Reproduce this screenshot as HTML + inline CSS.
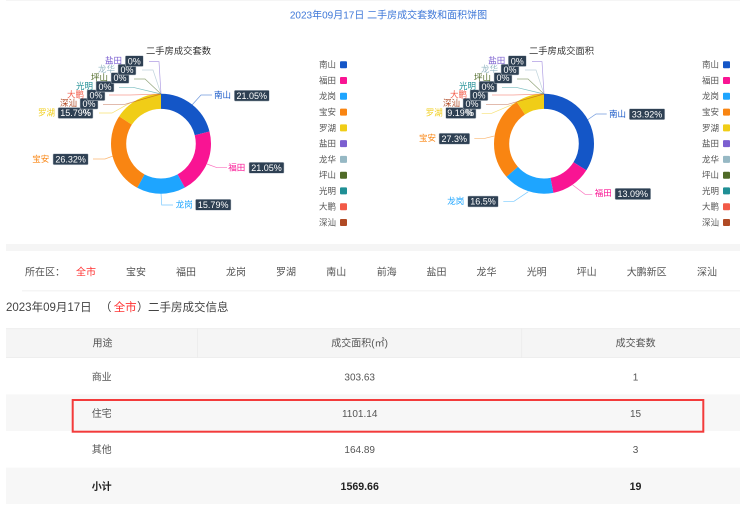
<!DOCTYPE html>
<html lang="zh">
<head>
<meta charset="utf-8">
<title>二手房成交信息</title>
<style>
html,body{margin:0;padding:0;background:#fff;width:740px;height:514px;overflow:hidden}
svg{display:block;font-family:"Liberation Sans","Noto Sans CJK SC",sans-serif;filter:blur(.3px)}
.l{font-size:8.5px}
.v{font-size:9px;fill:#fff;text-anchor:middle}
.b{fill:#2e4053;stroke:#c5ccd3;stroke-width:.5}
.g{font-size:8.5px;fill:#555}
.n{font-size:10px;fill:#555;text-anchor:middle}
.t{font-size:10px;fill:#555;text-anchor:middle}
.tb{font-size:10.6px;fill:#222;text-anchor:middle;font-weight:bold}
polyline{fill:none;stroke-width:.7;stroke-opacity:.6}
.ring{fill:none;stroke-width:15.2}
</style>
</head>
<body>
<svg width="740" height="514" viewBox="0 0 740 514" xmlns="http://www.w3.org/2000/svg">
<rect x="6" y="0" width="734" height="1" fill="#f5f5f5"/>
<text x="388.5" y="18.6" font-size="10" fill="#3f78d8" text-anchor="middle">2023年09月17日 二手房成交套数和面积饼图</text>

<!-- Chart 1 -->
<text x="178.5" y="54" font-size="9.3" fill="#333" text-anchor="middle">二手房成交套数</text>
<g transform="rotate(-90 161 143.7)">
<circle class="ring" cx="161" cy="143.7" r="42.4" pathLength="100" stroke="#1456c7" stroke-dasharray="21.05 78.95"/>
<circle class="ring" cx="161" cy="143.7" r="42.4" pathLength="100" stroke="#f91493" stroke-dasharray="21.05 78.95" stroke-dashoffset="-21.05"/>
<circle class="ring" cx="161" cy="143.7" r="42.4" pathLength="100" stroke="#1ea5ff" stroke-dasharray="15.79 84.21" stroke-dashoffset="-42.1"/>
<circle class="ring" cx="161" cy="143.7" r="42.4" pathLength="100" stroke="#f98512" stroke-dasharray="26.32 73.68" stroke-dashoffset="-57.89"/>
<circle class="ring" cx="161" cy="143.7" r="42.4" pathLength="100" stroke="#f0cd17" stroke-dasharray="15.79 84.21" stroke-dashoffset="-84.21"/>
</g>
<polyline stroke="#1456c7" points="192,105 201,95 212,95"/>
<polyline stroke="#f91493" points="207,164 217,167.7 227,167.7"/>
<polyline stroke="#1ea5ff" points="161,193 161.7,205 173,205"/>
<polyline stroke="#f98512" points="113,156 105,159 93,159"/>
<polyline stroke="#f0cd17" points="130,103 112,113 99,113"/>
<polyline stroke="#b04a25" points="161,94 125,104.3 103,104.3"/>
<polyline stroke="#f25a47" points="161,94 130,95 109,95"/>
<polyline stroke="#1f8f95" points="161,94 133,87.3 119,87.3"/>
<polyline stroke="#4f6a27" points="161,94 145,79 134,79"/>
<polyline stroke="#96b8c4" points="161,94 153,70 142,70"/>
<polyline stroke="#7b5fd0" points="161,94 159,61.6 149,61.6"/>

<g>
<text class="l" x="214" y="98" fill="#1456c7">南山</text><rect class="b" x="234.3" y="90.3" width="35" height="10.8" rx="1"/><text class="v" x="251.8" y="98.9">21.05%</text>
<text class="l" x="228.3" y="170.5" fill="#f91493">福田</text><rect class="b" x="249" y="162.3" width="35" height="11" rx="1"/><text class="v" x="266.5" y="170.9">21.05%</text>
<text class="l" x="175.7" y="207.5" fill="#1ea5ff">龙岗</text><rect class="b" x="195.5" y="199.3" width="35.5" height="11" rx="1"/><text class="v" x="213.2" y="207.9">15.79%</text>
<text class="l" x="32.3" y="161.8" fill="#f98512">宝安</text><rect class="b" x="53" y="153.8" width="35.2" height="11" rx="1"/><text class="v" x="70.6" y="162.4">26.32%</text>
<text class="l" x="38" y="115.7" fill="#f0cd17">罗湖</text><rect class="b" x="58" y="107.5" width="35" height="11" rx="1"/><text class="v" x="75.5" y="116.1">15.79%</text><text class="v" x="87" y="116.1">%</text>
<text class="l" x="60" y="106.2" fill="#b04a25">深汕</text><rect class="b" x="80" y="98.3" width="18" height="10.8" rx="1"/><text class="v" x="89" y="106.9">0%</text>
<text class="l" x="67" y="97.7" fill="#f25a47">大鹏</text><rect class="b" x="87" y="89.8" width="18" height="10.8" rx="1"/><text class="v" x="96" y="98.4">0%</text>
<text class="l" x="76" y="89" fill="#1f8f95">光明</text><rect class="b" x="96" y="81.2" width="18" height="10.8" rx="1"/><text class="v" x="105" y="89.8">0%</text>
<text class="l" x="91" y="80.6" fill="#4f6a27">坪山</text><rect class="b" x="111" y="72.6" width="18" height="10.8" rx="1"/><text class="v" x="120" y="81.2">0%</text>
<text class="l" x="98" y="72" fill="#96b8c4">龙华</text><rect class="b" x="118" y="64.2" width="18" height="10.8" rx="1"/><text class="v" x="127" y="72.8">0%</text>
<text class="l" x="105" y="63.6" fill="#7b5fd0">盐田</text><rect class="b" x="125.3" y="55.7" width="18" height="10.8" rx="1"/><text class="v" x="134.3" y="64.3">0%</text>
</g>

<!-- Legend 1 -->
<g class="g">
<text x="319" y="67.7">南山</text><text x="319" y="83.4">福田</text><text x="319" y="99.2">龙岗</text><text x="319" y="115">宝安</text><text x="319" y="130.8">罗湖</text><text x="319" y="146.5">盐田</text><text x="319" y="162.3">龙华</text><text x="319" y="178">坪山</text><text x="319" y="193.8">光明</text><text x="319" y="209.6">大鹏</text><text x="319" y="225.4">深汕</text>
</g>
<g>
<rect x="340" y="61.3" width="7" height="7" rx="1" fill="#1456c7"/><rect x="340" y="77" width="7" height="7" rx="1" fill="#f91493"/><rect x="340" y="92.8" width="7" height="7" rx="1" fill="#1ea5ff"/><rect x="340" y="108.6" width="7" height="7" rx="1" fill="#f98512"/><rect x="340" y="124.4" width="7" height="7" rx="1" fill="#f0cd17"/><rect x="340" y="140.1" width="7" height="7" rx="1" fill="#7b5fd0"/><rect x="340" y="155.9" width="7" height="7" rx="1" fill="#96b8c4"/><rect x="340" y="171.7" width="7" height="7" rx="1" fill="#4f6a27"/><rect x="340" y="187.4" width="7" height="7" rx="1" fill="#1f8f95"/><rect x="340" y="203.2" width="7" height="7" rx="1" fill="#f25a47"/><rect x="340" y="219" width="7" height="7" rx="1" fill="#b04a25"/>
</g>

<!-- Chart 2 -->
<text x="561.5" y="54" font-size="9.3" fill="#333" text-anchor="middle">二手房成交面积</text>
<g transform="rotate(-90 544 143.7)">
<circle class="ring" cx="544" cy="143.7" r="42.4" pathLength="100" stroke="#1456c7" stroke-dasharray="33.92 66.08"/>
<circle class="ring" cx="544" cy="143.7" r="42.4" pathLength="100" stroke="#f91493" stroke-dasharray="13.09 86.91" stroke-dashoffset="-33.92"/>
<circle class="ring" cx="544" cy="143.7" r="42.4" pathLength="100" stroke="#1ea5ff" stroke-dasharray="16.5 83.5" stroke-dashoffset="-47.01"/>
<circle class="ring" cx="544" cy="143.7" r="42.4" pathLength="100" stroke="#f98512" stroke-dasharray="27.3 72.7" stroke-dashoffset="-63.51"/>
<circle class="ring" cx="544" cy="143.7" r="42.4" pathLength="100" stroke="#f0cd17" stroke-dasharray="9.19 90.81" stroke-dashoffset="-90.81"/>
</g>
<polyline stroke="#1456c7" points="587.3,120 596,114 606.7,114"/>
<polyline stroke="#f91493" points="572.7,185 585,194.3 592.3,194.3"/>
<polyline stroke="#1ea5ff" points="528.3,191.7 514,201.3 503.3,201.3"/>
<polyline stroke="#f98512" points="494.3,136 485,138.3 474.3,138.3"/>
<polyline stroke="#f0cd17" points="516.7,102.7 491.7,113.3 481.7,113.3"/>
<polyline stroke="#b04a25" points="544,94 508,104.3 486,104.3"/>
<polyline stroke="#f25a47" points="544,94 513,95 492,95"/>
<polyline stroke="#1f8f95" points="544,94 516,87.3 502,87.3"/>
<polyline stroke="#4f6a27" points="544,94 528,79 517,79"/>
<polyline stroke="#96b8c4" points="544,94 536,70 525,70"/>
<polyline stroke="#7b5fd0" points="544,94 542,61.6 532,61.6"/>

<g>
<text class="l" x="609" y="117" fill="#1456c7">南山</text><rect class="b" x="629.3" y="108.7" width="35.5" height="11" rx="1"/><text class="v" x="647" y="117.3">33.92%</text>
<text class="l" x="594.7" y="196" fill="#f91493">福田</text><rect class="b" x="615" y="188.3" width="35.7" height="11.3" rx="1"/><text class="v" x="632.8" y="197">13.09%</text>
<text class="l" x="447.3" y="204" fill="#1ea5ff">龙岗</text><rect class="b" x="467.7" y="196" width="30.6" height="11" rx="1"/><text class="v" x="483" y="204.6">16.5%</text>
<text class="l" x="419" y="141" fill="#f98512">宝安</text><rect class="b" x="439" y="133.2" width="30.7" height="11" rx="1"/><text class="v" x="454.3" y="141.8">27.3%</text>
<text class="l" x="425.7" y="115.7" fill="#f0cd17">罗湖</text><rect class="b" x="445.7" y="107.5" width="30.3" height="11" rx="1"/><text class="v" x="460" y="116.1">9.19%</text><text class="v" x="470" y="116.1">%</text>
<text class="l" x="443" y="106.2" fill="#b04a25">深汕</text><rect class="b" x="463" y="98.3" width="18" height="10.8" rx="1"/><text class="v" x="472" y="106.9">0%</text>
<text class="l" x="450" y="97.7" fill="#f25a47">大鹏</text><rect class="b" x="470" y="89.8" width="18" height="10.8" rx="1"/><text class="v" x="479" y="98.4">0%</text>
<text class="l" x="459" y="89" fill="#1f8f95">光明</text><rect class="b" x="479" y="81.2" width="18" height="10.8" rx="1"/><text class="v" x="488" y="89.8">0%</text>
<text class="l" x="474" y="80.6" fill="#4f6a27">坪山</text><rect class="b" x="494" y="72.6" width="18" height="10.8" rx="1"/><text class="v" x="503" y="81.2">0%</text>
<text class="l" x="481" y="72" fill="#96b8c4">龙华</text><rect class="b" x="501" y="64.2" width="18" height="10.8" rx="1"/><text class="v" x="510" y="72.8">0%</text>
<text class="l" x="488.3" y="63.6" fill="#7b5fd0">盐田</text><rect class="b" x="508.3" y="55.7" width="18" height="10.8" rx="1"/><text class="v" x="517.3" y="64.3">0%</text>
</g>

<!-- Legend 2 -->
<g class="g">
<text x="702" y="67.7">南山</text><text x="702" y="83.4">福田</text><text x="702" y="99.2">龙岗</text><text x="702" y="115">宝安</text><text x="702" y="130.8">罗湖</text><text x="702" y="146.5">盐田</text><text x="702" y="162.3">龙华</text><text x="702" y="178">坪山</text><text x="702" y="193.8">光明</text><text x="702" y="209.6">大鹏</text><text x="702" y="225.4">深汕</text>
</g>
<g>
<rect x="723" y="61.3" width="7" height="7" rx="1" fill="#1456c7"/><rect x="723" y="77" width="7" height="7" rx="1" fill="#f91493"/><rect x="723" y="92.8" width="7" height="7" rx="1" fill="#1ea5ff"/><rect x="723" y="108.6" width="7" height="7" rx="1" fill="#f98512"/><rect x="723" y="124.4" width="7" height="7" rx="1" fill="#f0cd17"/><rect x="723" y="140.1" width="7" height="7" rx="1" fill="#7b5fd0"/><rect x="723" y="155.9" width="7" height="7" rx="1" fill="#96b8c4"/><rect x="723" y="171.7" width="7" height="7" rx="1" fill="#4f6a27"/><rect x="723" y="187.4" width="7" height="7" rx="1" fill="#1f8f95"/><rect x="723" y="203.2" width="7" height="7" rx="1" fill="#f25a47"/><rect x="723" y="219" width="7" height="7" rx="1" fill="#b04a25"/>
</g>

<!-- Band -->
<rect x="6" y="244" width="734" height="7" fill="#f5f5f5"/>

<!-- Nav -->
<text x="25" y="275.3" font-size="10" fill="#555">所在区：</text>
<text class="n" x="86" y="275.3" style="fill:#f33">全市</text>
<text class="n" x="136" y="275.3">宝安</text>
<text class="n" x="186" y="275.3">福田</text>
<text class="n" x="236" y="275.3">龙岗</text>
<text class="n" x="286" y="275.3">罗湖</text>
<text class="n" x="336.3" y="275.3">南山</text>
<text class="n" x="386.7" y="275.3">前海</text>
<text class="n" x="436.5" y="275.3">盐田</text>
<text class="n" x="486.5" y="275.3">龙华</text>
<text class="n" x="536.7" y="275.3">光明</text>
<text class="n" x="586.7" y="275.3">坪山</text>
<text class="n" x="646.7" y="275.3">大鹏新区</text>
<text class="n" x="707" y="275.3">深汕</text>
<rect x="22" y="290" width="718" height="1.5" fill="#f5f5f5"/>

<!-- Heading -->
<text y="310.8" font-size="11.5" fill="#444"><tspan x="6">2023年09月17日</tspan><tspan x="100">（</tspan><tspan x="113.7" fill="#f33">全市</tspan><tspan x="137">）</tspan><tspan x="148">二手房成交信息</tspan></text>

<!-- Table -->
<rect x="6" y="328.3" width="734" height="29.5" fill="#f5f5f5"/>
<rect x="6" y="328.3" width="734" height=".8" fill="#ebebeb"/>
<rect x="6" y="357" width="734" height=".8" fill="#ebebeb"/>
<rect x="197" y="328.3" width=".8" height="29.5" fill="#ebebeb"/>
<rect x="521.3" y="328.3" width=".8" height="29.5" fill="#ebebeb"/>
<rect x="6" y="394.3" width="734" height="36.7" fill="#f7f7f7"/>
<rect x="6" y="467.7" width="734" height="36.3" fill="#f7f7f7"/>

<text class="t" x="102.5" y="346.6">用途</text>
<text class="t" x="359.6" y="346.6">成交面积(㎡)</text>
<text class="t" x="635.6" y="346.6">成交套数</text>

<text class="t" x="101.7" y="380.6">商业</text>
<text class="t" x="359.7" y="380.6">303.63</text>
<text class="t" x="635.5" y="380.6">1</text>

<text class="t" x="101.7" y="416.8">住宅</text>
<text class="t" x="359.7" y="416.8">1101.14</text>
<text class="t" x="635.5" y="416.8">15</text>

<text class="t" x="101.7" y="453.2">其他</text>
<text class="t" x="359.7" y="453.2">164.89</text>
<text class="t" x="635.5" y="453.2">3</text>

<text class="tb" x="101.7" y="489.8" style="font-size:10px">小计</text>
<text class="tb" x="359.7" y="489.8">1569.66</text>
<text class="tb" x="635.5" y="489.8">19</text>

<rect x="72.7" y="400" width="630.6" height="31.7" fill="none" stroke="#f33b3b" stroke-width="2"/>
</svg>
</body>
</html>
